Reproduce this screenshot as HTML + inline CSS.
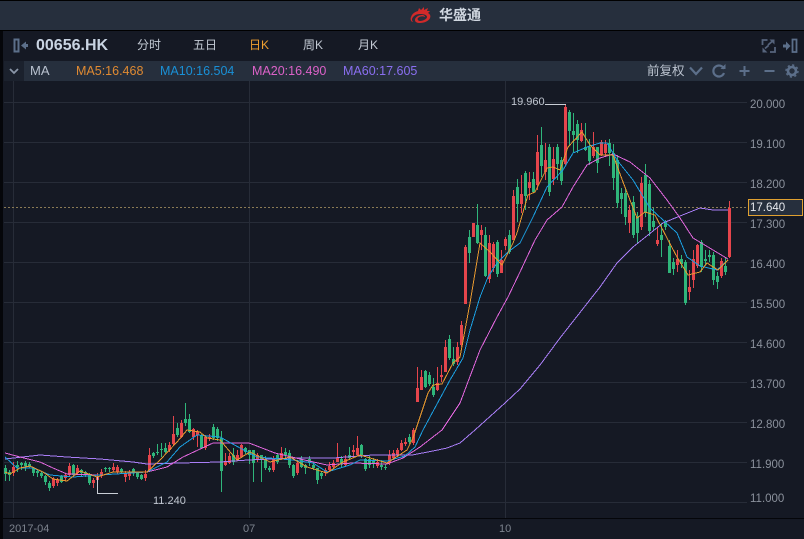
<!DOCTYPE html>
<html><head><meta charset="utf-8">
<style>
html,body{margin:0;padding:0;background:#151924;}
#p{position:relative;width:804px;height:539px;overflow:hidden;background:#151924;font-family:"Liberation Sans","Noto Sans CJK SC",sans-serif;}
#p div{position:absolute;}
.t{white-space:nowrap;line-height:16px;height:16px;}
.y{left:750px;color:#8b919c;font-size:11.5px;}
.tab{top:37px;color:#c3cad4;font-size:12px;}
.ma{top:63px;font-size:12.5px;}
polyline{shape-rendering:crispEdges;}
</style></head><body>
<div id="p">
<div style="left:0;top:0;width:804px;height:1px;background:#000"></div>
<div style="left:0;top:1px;width:804px;height:29px;background:#262f3d"></div>
<div style="left:0;top:30px;width:804px;height:1px;background:#000"></div>
<div style="left:0;top:31px;width:3px;height:508px;background:#05060a"></div>
<div style="left:4px;top:61px;width:20px;height:20px;background:#1b212d"></div>
<div style="left:24px;top:61px;width:780px;height:20px;background:#262f3d"></div>
<svg style="position:absolute;left:0;top:0" width="804" height="539" viewBox="0 0 804 539">
<!-- logo -->
<path d="M411 18c0-3 3-6 7-7l1-3 2 2 3-3 0 3 4-2-1 3 3 0-2 2c2 1 3 3 2 5-1 3-6 5-10 5-3 0-5-1-5-3 0-3 4-5 7-5 2 0 3 1 3 2-2-1-5-1-7 1-1 1 0 3 2 3 3 0 7-2 7-4 0-2-3-3-7-3-4 0-7 2-8 5 0 1 0 2 1 3-2 0-3-3-2-5z" fill="#d12a2a"/>
<!-- toolbar icons -->
<path d="M14.500 39.500h4v12h-4z" fill="none" stroke="#5c6f8a" stroke-width="2"/>
<path d="M21 45.500l5-4v2.500h2v3h-2v2.500z" fill="#5c6f8a"/>
<path d="M762.500 45v-5h5M775 47v5h-5" fill="none" stroke="#56647c" stroke-width="1.800"/>
<path d="M768 45l4-3.500M765 48.500l3.500-3" fill="none" stroke="#56647c" stroke-width="1.800"/>
<path d="M769.500 39.500h5v5zM762.500 52.500v-5l5 5z" fill="#56647c"/>
<path d="M783 44.500h3v-3l4.500 4.500-4.500 4.500v-3h-3z" fill="#5c6f8a"/>
<path d="M792.500 39.500h4v12.500h-4z" fill="none" stroke="#5c6f8a" stroke-width="1.800"/>
<path d="M10 69l4 4 4-4" fill="none" stroke="#8a96a8" stroke-width="1.800"/>
<!-- ma bar icons -->
<path d="M690 67.500l6 6.500 6-6.500" fill="none" stroke="#5c6f8a" stroke-width="2.200"/>
<path d="M724 69a5.500 5.500 0 1 0 0 4" fill="none" stroke="#5c6f8a" stroke-width="2.200"/>
<path d="M720.500 69h5v-5z" fill="#5c6f8a"/>
<path d="M739.500 71h10M744.500 66v10M764.500 71h10" fill="none" stroke="#5c6f8a" stroke-width="2"/>
<circle cx="792" cy="71" r="4" fill="none" stroke="#5c6f8a" stroke-width="2.600"/>
<circle cx="792" cy="71" r="6" fill="none" stroke="#5c6f8a" stroke-width="1.400" stroke-dasharray="2.200 2.500"/>
<!-- grid -->
<path d="M4 102.500H747M4 142.500H747M4 182.500H747M4 222.500H747M4 262.500H747M4 302.500H747M4 342.500H747M4 382.500H747M4 422.500H747M4 462.500H747M4 502.500H747M13.500 81V518M249.500 81V518M505.500 81V518" stroke="#272c38" stroke-width="1" fill="none"/>
<path d="M4 207.500H747" stroke="#8a7a55" stroke-width="1" stroke-dasharray="2 2" fill="none"/>
<!-- green wicks -->
<path stroke="#2fb57a" stroke-width="1" fill="none" d="M5.500 465V481M9.500 470V481M17.500 461V472M21.500 462V470M25.500 461V471M29.500 462V468M33.500 467V476M37.500 469V477M41.500 471V478M45.500 475V485M49.500 481V491M61.500 475V483M73.500 464V476M81.500 469V476M85.500 471V477M89.500 473V485M105.500 467V472M109.500 467V472M121.500 468V474M133.500 468V476M137.500 472V479M141.500 474V480M153.500 452V458M157.500 444V455M161.500 443V457M165.500 443V453M177.500 423V437M185.500 403V426M189.500 414V433M201.500 434V449M213.500 424V440M217.500 427V441M221.500 431V492M233.500 448V465M245.500 447V454M249.500 450V464M253.500 450V482M261.500 455V482M265.500 456V470M269.500 466V472M277.500 454V464M285.500 448V458M289.500 450V468M293.500 464V478M301.500 456V468M305.500 464V474M309.500 456V466M313.500 462V470M317.500 468V484M321.500 472V479M341.500 456V468M349.500 447V460M361.500 444V458M365.500 458V471M369.500 456V468M373.500 458V468M381.500 460V470M385.500 464V470M409.500 434V444M425.500 370V388M429.500 372V386M433.500 378V397M449.500 335V360M453.500 347V366M469.500 230V263M477.500 204V244M485.500 227V277M497.500 240V277M509.500 230V254M517.500 179V222M525.500 171V210M533.500 172V193M541.500 127V177M549.500 144V196M557.500 144V180M561.500 157V185M569.500 110V145M573.500 113V153M577.500 120V153M585.500 123V151M589.500 139V165M597.500 147V173M609.500 139V166M613.500 144V190M617.500 155V208M621.500 188V214M625.500 188V225M633.500 196V238M637.500 212V243M645.500 164V217M649.500 180V236M653.500 208V230M661.500 223V257M665.500 220V230M669.500 240V273M673.500 258V275M681.500 255V268M685.500 260V305M701.500 240V272M705.500 250V265M709.500 250V262M713.500 252V285M717.500 272V289M725.500 257V275"/>
<!-- green bodies -->
<path stroke="#2fb57a" stroke-width="3" fill="none" d="M5.500 468V474M9.500 472V475M17.500 465V467M21.500 463V465M25.500 463V466M29.500 464V467M33.500 468V473M37.500 471V473M41.500 473V476M45.500 476V482M49.500 483V488M61.500 476V482M73.500 465V475M81.500 470V473M85.500 472V475M89.500 474V483M105.500 468V469M109.500 468V469M121.500 469V472M133.500 469V473M137.500 473V477M141.500 475V479M153.500 453V456M157.500 452V453M161.500 449V450M165.500 448V452M177.500 428V435M185.500 419V423M189.500 419V432M201.500 435V448M213.500 427V438M217.500 429V438M221.500 438V471M233.500 455V462M245.500 448V452M249.500 450V455M253.500 450V463M261.500 455V460M265.500 459V468M269.500 468V470M277.500 455V462M285.500 452V455M289.500 453V465M293.500 465V476M301.500 459V467M305.500 465V468M309.500 459V463M313.500 465V468M317.500 468V480M321.500 473V476M341.500 459V464M349.500 455V458M361.500 445V455M365.500 459V469M369.500 459V465M373.500 460V463M381.500 465V467M385.500 467V468M409.500 437V442M425.500 371V387M429.500 375V384M433.500 387V395M449.500 339V358M453.500 359V364M469.500 237V253M477.500 225V243M485.500 235V276M497.500 242V274M509.500 235V252M517.500 187V204M525.500 173V196M533.500 179V192M541.500 145V166M549.500 147V192M557.500 147V164M561.500 160V181M569.500 112V131M573.500 131V135M577.500 124V140M585.500 147V150M589.500 147V161M597.500 147V163M609.500 143V153M613.500 153V178M617.500 160V203M621.500 193V199M625.500 193V217M633.500 202V235M637.500 216V233M645.500 175V212M649.500 184V231M653.500 221V227M661.500 235V240M665.500 222V227M669.500 246V273M673.500 262V269M681.500 259V264M685.500 262V303M701.500 242V267M705.500 259V261M709.500 255V257M713.500 255V280M717.500 276V282M725.500 266V272"/>
<!-- red wicks -->
<path stroke="#e5454c" stroke-width="1" fill="none" d="M13.500 462V476M53.500 477V488M57.500 478V486M65.500 473V481M69.500 463V476M77.500 465V474M93.500 478V488M97.500 473V494M101.500 469V478M113.500 463V472M117.500 465V474M125.500 471V482M129.500 470V480M145.500 470V481M149.500 448V471M169.500 442V452M173.500 416V445M181.500 420V438M193.500 428V440M197.500 430V447M205.500 435V450M209.500 434V441M225.500 453V466M229.500 453V464M237.500 450V461M241.500 444V458M257.500 453V462M273.500 456V472M281.500 447V460M297.500 460V475M325.500 468V476M329.500 462V472M333.500 460V468M337.500 443V462M345.500 455V466M353.500 445V457M357.500 436V456M377.500 459V468M389.500 450V465M393.500 450V460M397.500 448V457M401.500 440V451M405.500 438V446M413.500 428V445M417.500 367V402M421.500 370V390M437.500 367V391M441.500 365V382M445.500 340V372M457.500 342V365M461.500 321V347M465.500 245V304M473.500 223V237M481.500 225V250M489.500 235V283M493.500 242V272M501.500 250V273M505.500 237V250M513.500 190V240M521.500 175V213M529.500 172V200M537.500 135V190M545.500 143V180M553.500 147V185M565.500 105V165M581.500 123V142M593.500 132V158M601.500 140V156M605.500 140V156M629.500 205V233M641.500 177V230M657.500 227V246M677.500 250V272M689.500 270V300M693.500 250V288M697.500 244V268M721.500 258V278M729.500 201V258"/>
<!-- red bodies -->
<path stroke="#e5454c" stroke-width="3" fill="none" d="M13.500 467V473M53.500 479V486M57.500 480V483M65.500 475V478M69.500 466V475M77.500 468V473M93.500 480V483M97.500 477V480M101.500 472V476M113.500 467V470M117.500 467V472M125.500 473V477M129.500 472V476M145.500 474V478M149.500 455V470M169.500 445V450M173.500 434V444M181.500 423V437M193.500 429V437M197.500 432V435M205.500 437V448M209.500 437V438M225.500 462V465M229.500 456V463M237.500 455V460M241.500 445V457M257.500 455V460M273.500 458V470M281.500 453V458M297.500 463V473M325.500 470V473M329.500 466V470M333.500 463V467M337.500 458V462M345.500 459V465M353.500 450V452M357.500 448V455M377.500 462V466M389.500 455V463M393.500 453V458M397.500 450V455M401.500 443V450M405.500 442V444M413.500 430V443M417.500 388V402M421.500 377V390M437.500 383V390M441.500 375V377M445.500 347V372M457.500 347V362M461.500 325V345M465.500 247V304M473.500 223V237M481.500 230V235M489.500 243V279M493.500 244V268M501.500 260V273M505.500 239V246M513.500 196V240M521.500 194V204M529.500 182V188M537.500 152V185M545.500 160V172M553.500 159V179M565.500 107V164M581.500 130V141M593.500 147V156M601.500 142V155M605.500 144V153M629.500 210V223M641.500 183V227M657.500 240V244M677.500 259V265M689.500 287V292M693.500 259V280M697.500 245V266M721.500 261V276M729.500 208V257"/>
<!-- MA60 -->
<polyline fill="none" stroke="#a97ef7" stroke-width="1" points="5,459 40,455 67,457 100,459 133,462 147,464 180,463 220,462 248,460 293,458 333,458 373,455 412,455 433,451 447,448 460,443 475,430 505,403 520,389 540,365 560,338 600,287 617,263 633,247 663,223 680,216 700,208 713,210 728,210"/>
<!-- MA20 -->
<polyline fill="none" stroke="#e066dc" stroke-width="1" points="5,453 20,457 40,462 53,468 67,474 100,475 147,472 167,467 183,457 213,443 249,443 275,453 300,459 327,465 353,463 387,464 403,458 420,447 442,430 460,403 480,350 497,317 508,297 520,272 535,240 547,220 562,207 573,187 587,165 600,158 613,154 630,162 650,178 667,200 680,218 693,238 713,250 728,259"/>
<!-- MA10 -->
<polyline fill="none" stroke="#1b9ee0" stroke-width="1" points="5,457 17,468 33,468 50,475 73,477 100,475 147,472 167,462 180,447 197,435 220,437 240,448 257,457 293,460 313,463 327,472 350,465 360,460 387,461 405,456 415,447 423,430 430,417 450,380 463,358 470,330 480,297 488,277 497,263 508,252 520,243 533,217 547,187 563,170 573,153 587,147 600,143 607,143 613,153 617,160 633,180 650,208 677,233 687,257 700,266 717,270 728,260"/>
<!-- MA5 -->
<polyline fill="none" stroke="#e8992f" stroke-width="1" points="5,472 10,474 20,468 30,466 43,472 53,479 67,481 80,471 97,477 113,472 133,472 147,472 160,460 177,442 187,430 200,432 207,438 220,440 237,460 250,452 270,462 290,457 307,467 327,473 343,462 360,455 387,463 407,450 413,438 418,423 428,393 433,385 442,384 453,363 460,357 470,303 480,243 490,252 502,265 513,243 517,233 528,195 535,192 547,168 553,167 560,170 568,147 582,132 590,145 600,155 613,155 623,182 637,218 645,212 655,215 667,238 677,257 688,275 700,272 707,263 718,270 728,260"/>
<!-- hi / lo markers -->
<path d="M545 104.500H566M97 493.500H118M97.500 477V494" stroke="#c9ced6" stroke-width="1" fill="none"/>
<rect x="748.500" y="199.500" width="54" height="16" fill="#262f3d" stroke="#e0a030" stroke-width="1"/>
</svg>
<div class="t" style="left:439px;top:7px;color:#d0d7e0;font-size:14px;font-weight:bold">华盛通</div>
<div class="t" style="left:36px;top:38px;color:#c9d4e2;font-size:16px;font-weight:bold">00656.HK</div>
<div class="t tab" style="left:137px">分时</div>
<div class="t tab" style="left:193px">五日</div>
<div class="t tab" style="left:249px;color:#f0a030">日K</div>
<div class="t tab" style="left:303px">周K</div>
<div class="t tab" style="left:358px">月K</div>
<div class="t" style="left:30px;top:63px;color:#b9c2cf;font-size:13px">MA</div>
<div class="t ma" style="left:76px;color:#e08a32">MA5:16.468</div>
<div class="t ma" style="left:160px;color:#1a90d6">MA10:16.504</div>
<div class="t ma" style="left:252px;color:#dc62c8">MA20:16.490</div>
<div class="t ma" style="left:343px;color:#8a6ff0">MA60:17.605</div>
<div class="t" style="left:647px;top:63px;color:#bcc4d0;font-size:12.500px">前复权</div>
<div class="t y" style="top:97px">20.000</div>
<div class="t y" style="top:137px">19.100</div>
<div class="t y" style="top:177px">18.200</div>
<div class="t" style="left:750px;top:200px;color:#e6e9ee;font-size:11.500px">17.640</div>
<div class="t y" style="top:217px">17.300</div>
<div class="t y" style="top:257px">16.400</div>
<div class="t y" style="top:297px">15.500</div>
<div class="t y" style="top:337px">14.600</div>
<div class="t y" style="top:377px">13.700</div>
<div class="t y" style="top:417px">12.800</div>
<div class="t y" style="top:457px">11.900</div>
<div class="t y" style="top:491px">11.000</div>
<div class="t" style="left:511px;top:94px;color:#c0c6d0;font-size:11px">19.960</div>
<div class="t" style="left:153px;top:493px;color:#c0c6d0;font-size:11px">11.240</div>
<div style="left:3px;top:518px;width:801px;height:1px;background:#05060a"></div>
<div class="t" style="left:9px;top:521px;color:#7d838e;font-size:11px">2017-04</div>
<div class="t" style="left:243px;top:521px;color:#7d838e;font-size:11px">07</div>
<div class="t" style="left:499px;top:521px;color:#7d838e;font-size:11px">10</div>
</div>
</body></html>
